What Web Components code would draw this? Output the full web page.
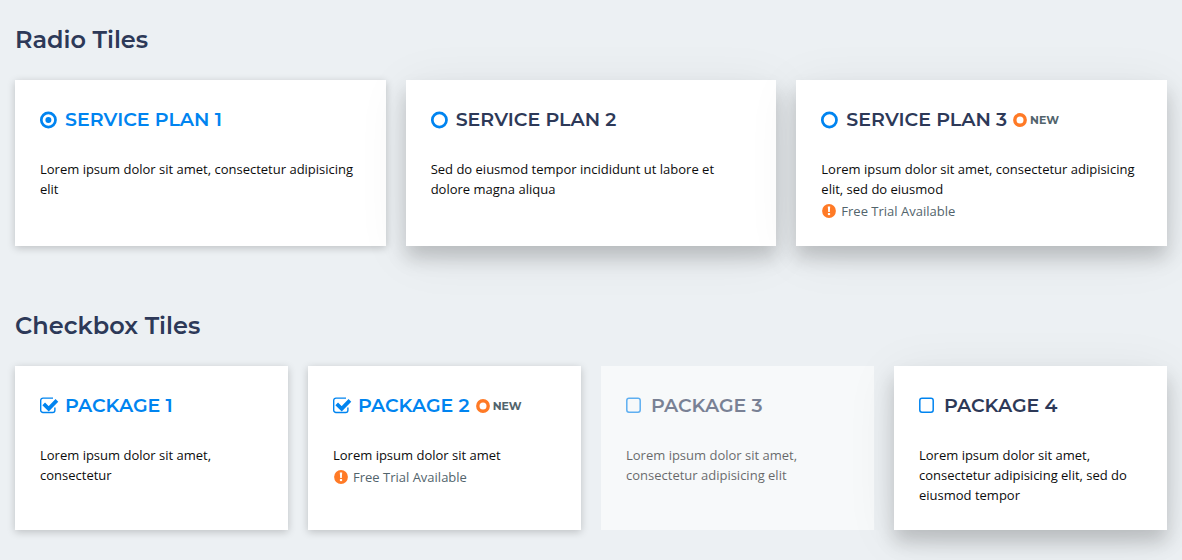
<!DOCTYPE html>
<html lang="en">
<head>
<meta charset="utf-8">
<meta name="viewport" content="width=device-width, initial-scale=1">
<title>Tiles</title>
<style>
    body {
        --navy: #2d3958;
        --blue: #0084f0;
        --orange: #ff7a26;
        --slate: #52646c;
        --heading: Montserrat, Inter, "Liberation Sans", sans-serif;
        margin: 0;
        padding: 24px 15px 30px;
        background: #ecf0f3;
        color: #0c0c0c;
        font: 13px/20px "Open Sans", "Noto Sans", sans-serif;
    }

    main {
        display: grid;
        gap: 64px;
    }
</style>
</head>
<body>
<main>
    <tile-group heading="Radio Tiles" columns="3">
        <option-tile type="radio" name="plan" title-text="Service Plan 1" checked>Lorem ipsum dolor sit amet, consectetur adipisicing elit</option-tile>
        <option-tile type="radio" name="plan" title-text="Service Plan 2">Sed do eiusmod tempor incididunt ut labore et dolore magna aliqua</option-tile>
        <option-tile type="radio" name="plan" title-text="Service Plan 3">
            <new-badge slot="badge">New</new-badge>
            Lorem ipsum dolor sit amet, consectetur adipisicing elit, sed do eiusmod
            <tile-note slot="note">Free Trial Available</tile-note>
        </option-tile>
    </tile-group>

    <tile-group heading="Checkbox Tiles" columns="4">
        <option-tile type="checkbox" name="package1" title-text="Package 1" checked>Lorem ipsum dolor sit amet, consectetur</option-tile>
        <option-tile type="checkbox" name="package2" title-text="Package 2" checked>
            <new-badge slot="badge">New</new-badge>
            Lorem ipsum dolor sit amet
            <tile-note slot="note">Free Trial Available</tile-note>
        </option-tile>
        <option-tile type="checkbox" name="package3" title-text="Package 3" disabled>Lorem ipsum dolor sit amet, consectetur adipisicing elit</option-tile>
        <option-tile type="checkbox" name="package4" title-text="Package 4">Lorem ipsum dolor sit amet, consectetur adipisicing elit, sed do eiusmod tempor</option-tile>
    </tile-group>
</main>

<script>
class TileGroup extends HTMLElement {
    constructor() {
        super();
        this.attachShadow({ mode: 'open' });
    }

    connectedCallback() {
        const heading = this.getAttribute('heading') || '';
        const columns = this.getAttribute('columns') || '3';

        this.shadowRoot.innerHTML = `
            <style>
                :host {
                    display: block;
                }

                h2 {
                    margin: 0 0 24px;
                    color: var(--navy);
                    font: 600 24px/32px var(--heading);
                }

                .tiles {
                    display: grid;
                    grid-template-columns: repeat(${columns}, 1fr);
                    gap: 20px;
                }
            </style>
            <section>
                <h2>${heading}</h2>
                <div class="tiles"><slot></slot></div>
            </section>
        `;

        // radios in separate shadow roots are not grouped by the browser
        this.addEventListener('tile-change', (e) => {
            if (e.target.getAttribute('type') !== 'radio') return;
            this.querySelectorAll('option-tile').forEach((tile) => {
                if (tile !== e.target) tile.uncheck();
            });
        });
    }
}

const ICONS = {
    radio: `
        <svg viewBox="0 0 18 18" aria-hidden="true">
            <circle cx="8.4" cy="9" r="7.1" fill="none" stroke="currentColor" stroke-width="2.7"/>
            <circle class="on" cx="8.4" cy="9" r="3" fill="currentColor"/>
        </svg>`,
    checkbox: `
        <svg viewBox="0 0 18 18" aria-hidden="true">
            <rect class="off" x=".8" y="1.3" width="13.4" height="14" rx="2.2" fill="none" stroke="currentColor" stroke-width="1.5"/>
            <path class="on" d="M13 1.1H3A2.3 2.3 0 0 0 .7 3.4v9.8A2.3 2.3 0 0 0 3 15.5h9.6a2.3 2.3 0 0 0 2.3-2.3v-2.6" fill="none" stroke="currentColor" stroke-width="1.4"/>
            <path class="on" d="M3.7 6.9l5 4.9 8.2-8.4" fill="none" stroke="currentColor" stroke-width="3.8"/>
        </svg>`
};

class OptionTile extends HTMLElement {
    constructor() {
        super();
        this.attachShadow({ mode: 'open' });
    }

    connectedCallback() {
        const type = this.getAttribute('type') || 'checkbox';
        const name = this.getAttribute('name') || '';
        const title = this.getAttribute('title-text') || '';
        const checked = this.hasAttribute('checked') ? 'checked' : '';
        const disabled = this.hasAttribute('disabled') ? 'disabled' : '';

        this.shadowRoot.innerHTML = `
            <style>
                * {
                    box-sizing: border-box;
                }

                :host {
                    display: grid;
                    position: relative;
                    background: white;
                    box-shadow: 0 12px 18px rgba(0, 0, 0, 0.18), 0 8px 50px rgba(0, 0, 0, 0.07);
                }

                :host([checked]) {
                    box-shadow: 0 2px 8px rgba(0, 0, 0, 0.2);
                }

                :host([disabled]) {
                    box-shadow: none;
                    opacity: 0.6;
                }

                label {
                    display: block;
                    padding: 25px;
                    cursor: pointer;
                }

                .title {
                    display: flex;
                    align-items: center;
                    height: 30px;
                    margin-bottom: 24px;
                    color: var(--navy);
                    font: 600 19px/30px var(--heading);
                    text-transform: uppercase;
                    white-space: nowrap;
                }

                :host([checked]) .title {
                    color: var(--blue);
                }

                .control {
                    display: grid;
                    flex: none;
                    width: 18px;
                    height: 18px;
                    margin-right: 7px;
                    color: var(--blue);
                }

                .control > * {
                    grid-area: 1 / 1;
                    width: 18px;
                    height: 18px;
                    margin: 0;
                }

                input {
                    appearance: none;
                    border-radius: 4px;
                }

                svg {
                    overflow: visible;
                    pointer-events: none;
                }

                input:not(:checked) + svg .on,
                input:checked + svg .off {
                    display: none;
                }
            </style>
            <label>
                <span class="title">
                    <span class="control">
                        <input type="${type}" name="${name}" ${checked} ${disabled}>
                        ${ICONS[type]}
                    </span>
                    <span>${title}</span>
                    <slot name="badge"></slot>
                </span>
                <slot></slot>
                <slot name="note"></slot>
            </label>
        `;

        this.input = this.shadowRoot.querySelector('input');
        this.input.addEventListener('change', () => {
            this.toggleAttribute('checked', this.input.checked);
            this.dispatchEvent(new CustomEvent('tile-change', { bubbles: true }));
        });
    }

    uncheck() {
        this.input.checked = false;
        this.removeAttribute('checked');
    }
}

class NewBadge extends HTMLElement {
    constructor() {
        super();
        this.attachShadow({ mode: 'open' }).innerHTML = `
            <style>
                :host {
                    display: flex;
                    align-items: center;
                    gap: 3px;
                    margin-left: 6px;
                    color: var(--slate);
                    font: 700 11px/14px var(--heading);
                }

                svg {
                    width: 14px;
                    height: 14px;
                    color: var(--orange);
                }
            </style>
            <svg viewBox="0 0 14 14" aria-hidden="true">
                <circle cx="7" cy="7" r="5.2" fill="none" stroke="currentColor" stroke-width="3.4"/>
            </svg>
            <span><slot></slot></span>
        `;
    }
}

class TileNote extends HTMLElement {
    constructor() {
        super();
        this.attachShadow({ mode: 'open' }).innerHTML = `
            <style>
                :host {
                    display: flex;
                    align-items: center;
                    gap: 5px;
                    margin-top: 2px;
                    padding-left: 1px;
                    color: var(--slate);
                }

                svg {
                    width: 14px;
                    height: 14px;
                    color: var(--orange);
                }
            </style>
            <svg viewBox="0 0 14 14" aria-hidden="true">
                <circle cx="7" cy="7" r="6.9" fill="currentColor"/>
                <path d="M5.8 2.6h2.4l-.4 5.4H6.2z" fill="white"/>
                <rect x="5.9" y="9" width="2.2" height="2.1" fill="white"/>
            </svg>
            <span><slot></slot></span>
        `;
    }
}

customElements.define('tile-group', TileGroup);
customElements.define('option-tile', OptionTile);
customElements.define('new-badge', NewBadge);
customElements.define('tile-note', TileNote);
</script>
</body>
</html>
